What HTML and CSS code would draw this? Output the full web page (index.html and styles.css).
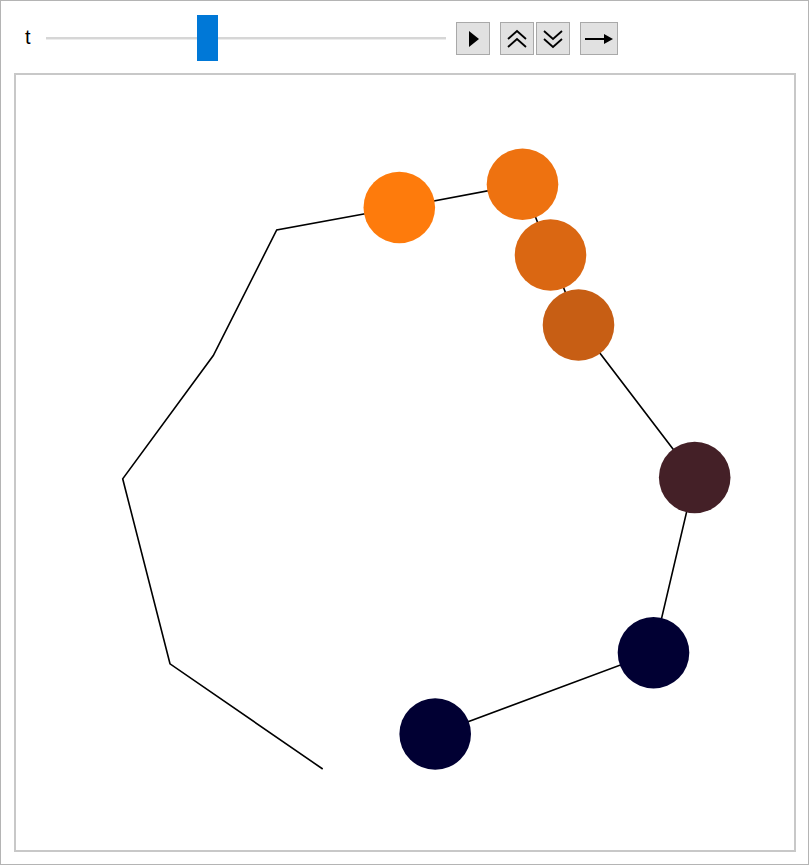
FILE: index.html
```html
<!DOCTYPE html>
<html>
<head>
<meta charset="utf-8">
<link rel="stylesheet" href="styles.css">
</head>
<body>
<div class="panel">
  <div class="controls">
    <span class="label">t</span>
    <div class="slider">
      <div class="track"></div>
      <div class="thumb" style="left:151px"></div>
    </div>
    <button class="btn play" aria-label="play">
      <svg width="12" height="18" viewBox="0 0 12 18"><path d="M1 1 L11 9 L1 17 Z" fill="#000"/></svg>
    </button>
    <div class="pair">
      <button class="btn" aria-label="faster">
        <svg width="22" height="20" viewBox="0 0 22 20"><path d="M2 10 L11 2 L20 10 M2 18 L11 10 L20 18" fill="none" stroke="#000" stroke-width="1.8"/></svg>
      </button>
      <button class="btn" aria-label="slower">
        <svg width="22" height="20" viewBox="0 0 22 20"><path d="M2 2 L11 10 L20 2 M2 10 L11 18 L20 10" fill="none" stroke="#000" stroke-width="1.8"/></svg>
      </button>
    </div>
    <button class="btn wide" aria-label="direction">
      <svg width="30" height="12" viewBox="0 0 30 12"><path d="M1 6 H22" stroke="#000" stroke-width="2"/><path d="M20 1 L29 6 L20 11 Z" fill="#000"/></svg>
    </button>
  </div>
  <div class="plot">
    <svg class="canvas" width="778" height="775" viewBox="16 75 778 775">
      <polyline points="435.2,734 653.5,652.7 694.7,477.5 578.5,325 550.5,255 522.5,184.2 399.3,207.5 276.7,230 213.3,355.5 122.7,478.8 170,663.8 322.7,769" fill="none" stroke="#000" stroke-width="1.6" stroke-linejoin="miter"/>
      <circle cx="399.3" cy="207.5" r="35.8" fill="#fe7b0c"/>
      <circle cx="522.5" cy="184.2" r="35.8" fill="#ee7210"/>
      <circle cx="550.5" cy="255" r="35.8" fill="#da6712"/>
      <circle cx="578.5" cy="325" r="35.8" fill="#c75e14"/>
      <circle cx="694.7" cy="477.5" r="35.8" fill="#442027"/>
      <circle cx="653.5" cy="652.7" r="35.8" fill="#010033"/>
      <circle cx="435.2" cy="734" r="35.8" fill="#010033"/>
    </svg>
  </div>
</div>
</body>
</html>
```

FILE: styles.css
```css
html, body {
  margin: 0;
  padding: 0;
  background: #ffffff;
}
body {
  font-family: "Liberation Sans", Arial, sans-serif;
}
.panel {
  box-sizing: border-box;
  width: 809px;
  height: 865px;
  border: 1px solid #b4b4b4;
  padding: 14px 0 12px 13px;
  background: #fff;
}
.controls {
  display: flex;
  align-items: center;
  height: 46px;
  padding-left: 11px;
}
.label {
  font-size: 20px;
  color: #000;
  width: 21px;
  line-height: 22px;
  margin-top: -2px;
}
.slider {
  position: relative;
  width: 400px;
  height: 46px;
  margin-right: 10px;
}
.track {
  position: absolute;
  left: 0;
  right: 0;
  top: 22px;
  height: 2px;
  background: #d6d6d6;
  border-bottom: 1px solid #ececec;
}
.thumb {
  position: absolute;
  top: 0;
  width: 21px;
  height: 46px;
  background: #0078d7;
}
.btn {
  box-sizing: border-box;
  width: 34px;
  height: 33px;
  margin: 1px 0 0 0;
  padding: 0;
  border: 1px solid #a9a9a9;
  background: #e1e1e1;
  display: flex;
  align-items: center;
  justify-content: center;
}
.btn svg {
  display: block;
}
.play svg {
  margin-left: 2px;
}
.pair {
  display: flex;
  gap: 2px;
  margin-left: 10px;
}
.wide {
  width: 38px;
  margin-left: 10px;
}
.plot {
  box-sizing: border-box;
  width: 782px;
  height: 779px;
  margin-top: 12px;
  border: 2px solid #c8c8c8;
}
.canvas {
  display: block;
}
```
